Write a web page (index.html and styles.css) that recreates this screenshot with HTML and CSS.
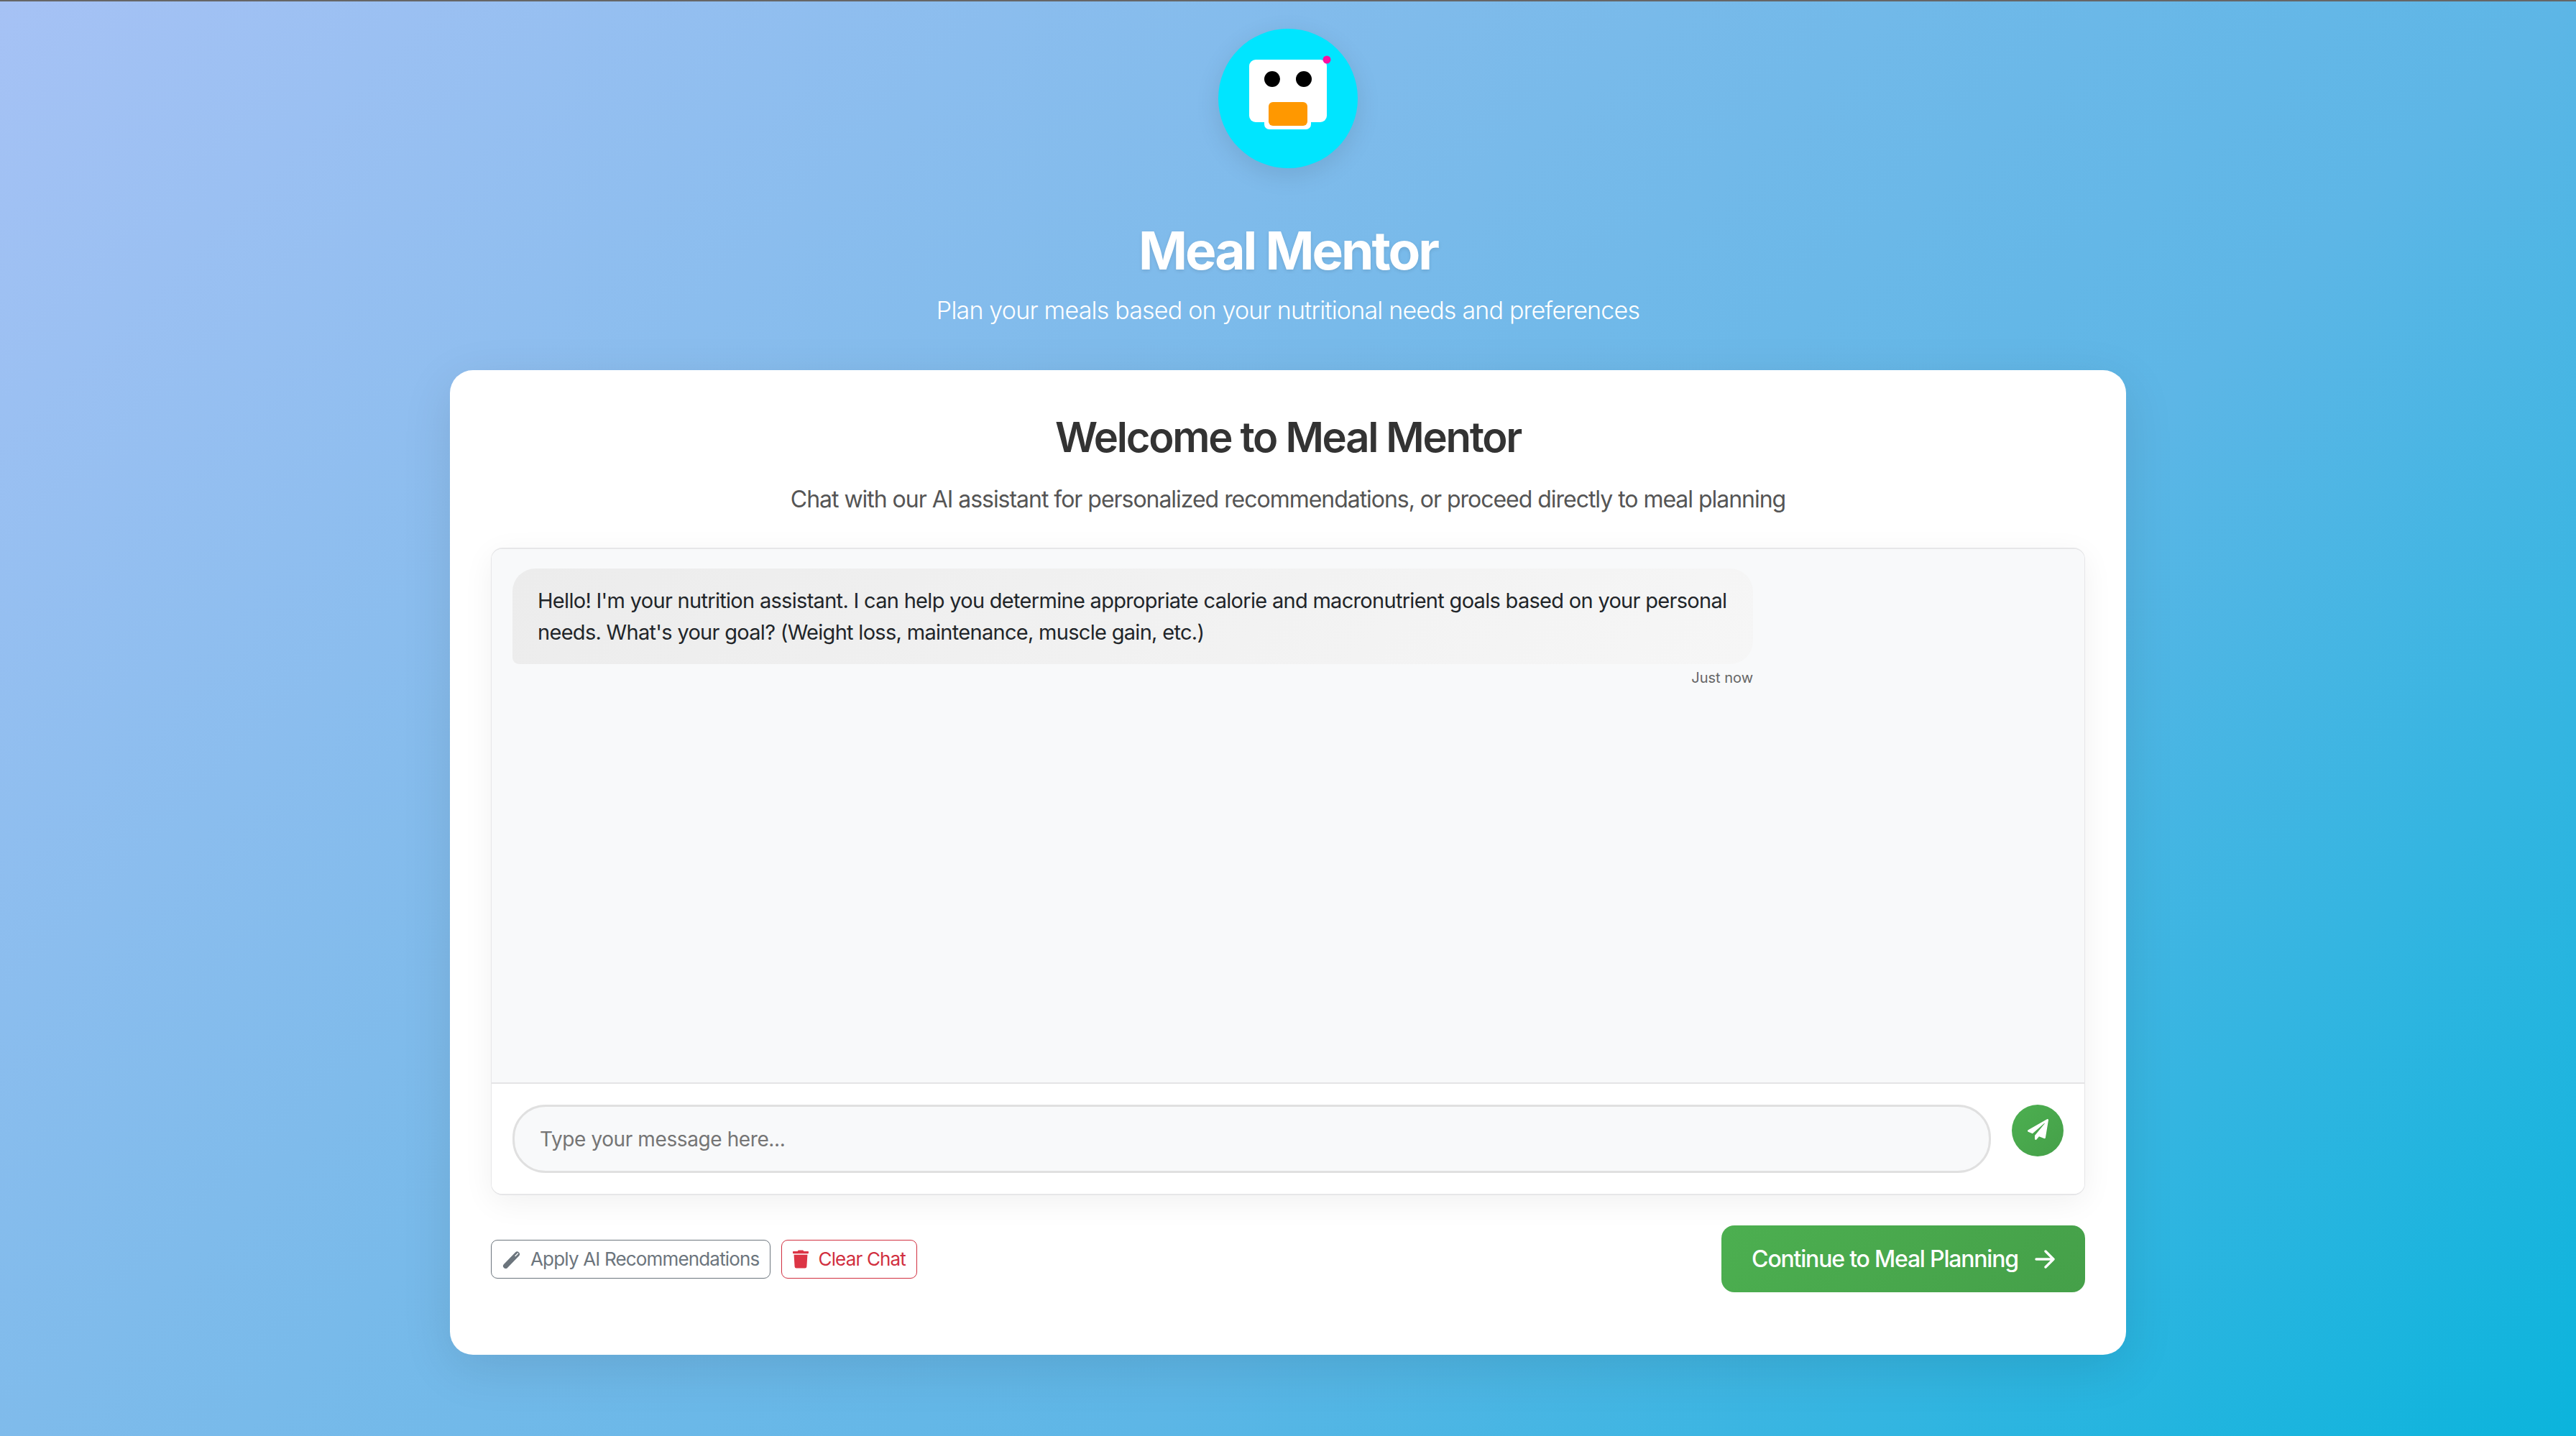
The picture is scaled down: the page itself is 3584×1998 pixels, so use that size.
FILE: index.html
```html
<!DOCTYPE html>
<html lang="en">
<head>
<meta charset="utf-8">
<title>Meal Mentor</title>
<link rel="stylesheet" href="styles.css">
</head>
<body>
<header class="hero">
  <div class="logo">
    <svg class="bot" viewBox="0 0 194 194" width="194" height="194" aria-hidden="true">
      <rect x="64" y="100" width="65" height="40" rx="7" fill="#fff"/>
      <rect x="43" y="43" width="108" height="87" rx="9" fill="#fff"/>
      <circle cx="75" cy="70" r="11" fill="#000"/>
      <circle cx="119" cy="70" r="11" fill="#000"/>
      <rect x="70" y="102" width="54" height="33" rx="6" fill="#ff9800"/>
      <circle cx="151" cy="43" r="5.5" fill="#ff0fa0"/>
    </svg>
  </div>
  <h1 class="brand">Meal Mentor</h1>
  <p class="tagline">Plan your meals based on your nutritional needs and preferences</p>
</header>
<main class="card">
  <h2 class="card-title">Welcome to Meal Mentor</h2>
  <p class="card-sub">Chat with our AI assistant for personalized recommendations, or proceed directly to meal planning</p>
  <section class="chat">
    <div class="messages">
      <div class="message">
        <div class="bubble">Hello! I'm your nutrition assistant. I can help you determine appropriate calorie and macronutrient goals based on your personal needs. What's your goal? (Weight loss, maintenance, muscle gain, etc.)</div>
        <div class="stamp">Just now</div>
      </div>
    </div>
    <div class="composer">
      <div class="input">Type your message here...</div>
      <button class="send" type="button" aria-label="Send">
        <svg viewBox="0 0 512 512" width="29" height="29"><path fill="#fff" d="M476 3.2L12.5 270.6c-18.1 10.4-15.8 35.6 2.2 43.2L121 358.4l287.3-253.2c5.5-4.9 13.3 2.6 8.6 8.3L176 407v80.5c0 23.6 28.5 32.9 42.5 15.8L282 426l124.6 52.2c14.2 6 30.4-2.9 33-18.2l72-432C515 7.8 493.3-6.8 476 3.2z"/></svg>
      </button>
    </div>
  </section>
  <div class="actions">
    <div class="tools">
      <button class="tool tool-grey" type="button">
        <svg viewBox="0 0 26 26" width="26" height="26"><path fill="none" stroke="#6c757d" stroke-width="7" stroke-linecap="round" d="M4.500 22.500L20.500 6"/><path fill="none" stroke="#fff" stroke-width="1.300" stroke-linecap="round" d="M18 8.500L21.500 5"/></svg>
        Apply AI Recommendations
      </button>
      <button class="tool tool-red" type="button">
        <svg viewBox="0 0 448 512" width="22" height="26"><path fill="#dc3545" d="M432 32H312l-9.400-18.700A24 24 0 0 0 281.100 0H166.800a23.720 23.720 0 0 0-21.400 13.300L136 32H16A16 16 0 0 0 0 48v32a16 16 0 0 0 16 16h416a16 16 0 0 0 16-16V48a16 16 0 0 0-16-16zM53.200 467a48 48 0 0 0 47.900 45h245.800a48 48 0 0 0 47.900-45L416 128H32z"/></svg>
        Clear Chat
      </button>
    </div>
    <button class="continue" type="button">
      Continue to Meal Planning
      <svg viewBox="0 0 28 28" width="28" height="28"><path fill="none" stroke="#fff" stroke-width="3.400" stroke-linecap="round" stroke-linejoin="round" d="M2 14h24M15 3l11 11-11 11"/></svg>
    </button>
  </div>
</main>
</body>
</html>
```
FILE: styles.css
```css
* { box-sizing: border-box; }
html, body { margin: 0; height: 100%; }
body {
  min-height: 1998px;
  border-top: 2px solid #666;
  background: linear-gradient(135deg, #a6c2f5 0%, #7fbbeb 36%, #5db6e6 64%, #0bb4dc 100%);
  font-family: Inter, "Noto Sans", sans-serif;
  display: flex;
  flex-direction: column;
  align-items: center;
  overflow: hidden;
}
.hero { display: flex; flex-direction: column; align-items: center; padding-top: 38px; color: #fff; }
.logo {
  width: 194px; height: 194px; border-radius: 50%;
  background: #00e5ff;
  box-shadow: 0 9px 34px rgba(0,0,0,.1);
}
.bot { display: block; }
.brand {
  margin: 71px 0 0; font-size: 73px; line-height: 88px; font-weight: 700;
  letter-spacing: -3px; text-shadow: 0 2px 5px rgba(0,0,0,.1);
}
.tagline { margin: 12px 0 0; font-size: 34px; line-height: 54px; font-weight: 300; letter-spacing: -.8px; }
.card {
  width: 2332px; height: 1370px; margin-top: 56px; padding: 57px;
  background: #fff; border-radius: 32px;
  box-shadow: 0 18px 70px rgba(0,0,0,.1);
}
.card-title {
  margin: 0; text-align: center; color: #333;
  font-size: 58px; line-height: 72px; font-weight: 600; letter-spacing: -2.300px;
}
.card-sub { margin: 28px 0 0; text-align: center; color: #555; font-size: 32px; line-height: 46px; letter-spacing: -1.030px; }
.chat {
  height: 901px; margin-top: 44px; display: flex; flex-direction: column;
  background: #fff; border: 2px solid #e6e6e8; border-radius: 16px; overflow: hidden;
  box-shadow: 0 10px 44px rgba(0,0,0,.06);
  border-left-width: 1px; border-right-width: 1px;
}
.messages { flex: 1; padding: 27px 29px; background: #f8f9fa; }
.message { width: 1726px; }
.bubble {
  padding: 23px 35px; border-radius: 32px 32px 32px 9px;
  background: linear-gradient(135deg, #ececec, #f6f6f6);
  color: #212529; font-size: 29px; line-height: 43.500px; letter-spacing: -.7px;
}
.stamp { margin-top: 8px; text-align: right; font-size: 20px; line-height: 22px; color: #666; }
.composer {
  display: flex; align-items: flex-start; gap: 29px; padding: 29px;
  border-top: 2px solid #e4e4e6; background: #fff;
}
.input {
  flex: 1; height: 95px; display: flex; align-items: center; padding: 1px 35px 0;
  background: #f8f9fa; border: 3px solid #e0e0e0; border-radius: 46px;
  color: #757575; font-size: 28px; letter-spacing: -.4px;
}
.send {
  width: 72px; height: 72px; padding: 0 0 4px; border: 0; border-radius: 50%;
  background: linear-gradient(135deg, #4caf50, #45a049);
  display: flex; align-items: center; justify-content: center;
}
.actions { display: flex; align-items: center; justify-content: space-between; margin-top: 42px; }
.tools { display: flex; gap: 15px; }
.tool {
  height: 54px; display: flex; align-items: center; gap: 13px; padding: 0 15px;
  background: #fff; border: 1px solid; border-radius: 9px;
  font-family: inherit; font-size: 26px; letter-spacing: -.83px;
}
.tool-grey { color: #6c757d; border-color: #6c757d; }
.tool-red { color: #d12f40; border-color: #d12f40; }
.continue {
  width: 506px; height: 93px; display: flex; align-items: center; justify-content: center; gap: 23px;
  border: 0; border-radius: 18px; color: #fff;
  background: linear-gradient(135deg, #4caf50, #45a049);
  font-family: inherit; font-size: 32px; font-weight: 500; letter-spacing: -1.200px;
}
```
